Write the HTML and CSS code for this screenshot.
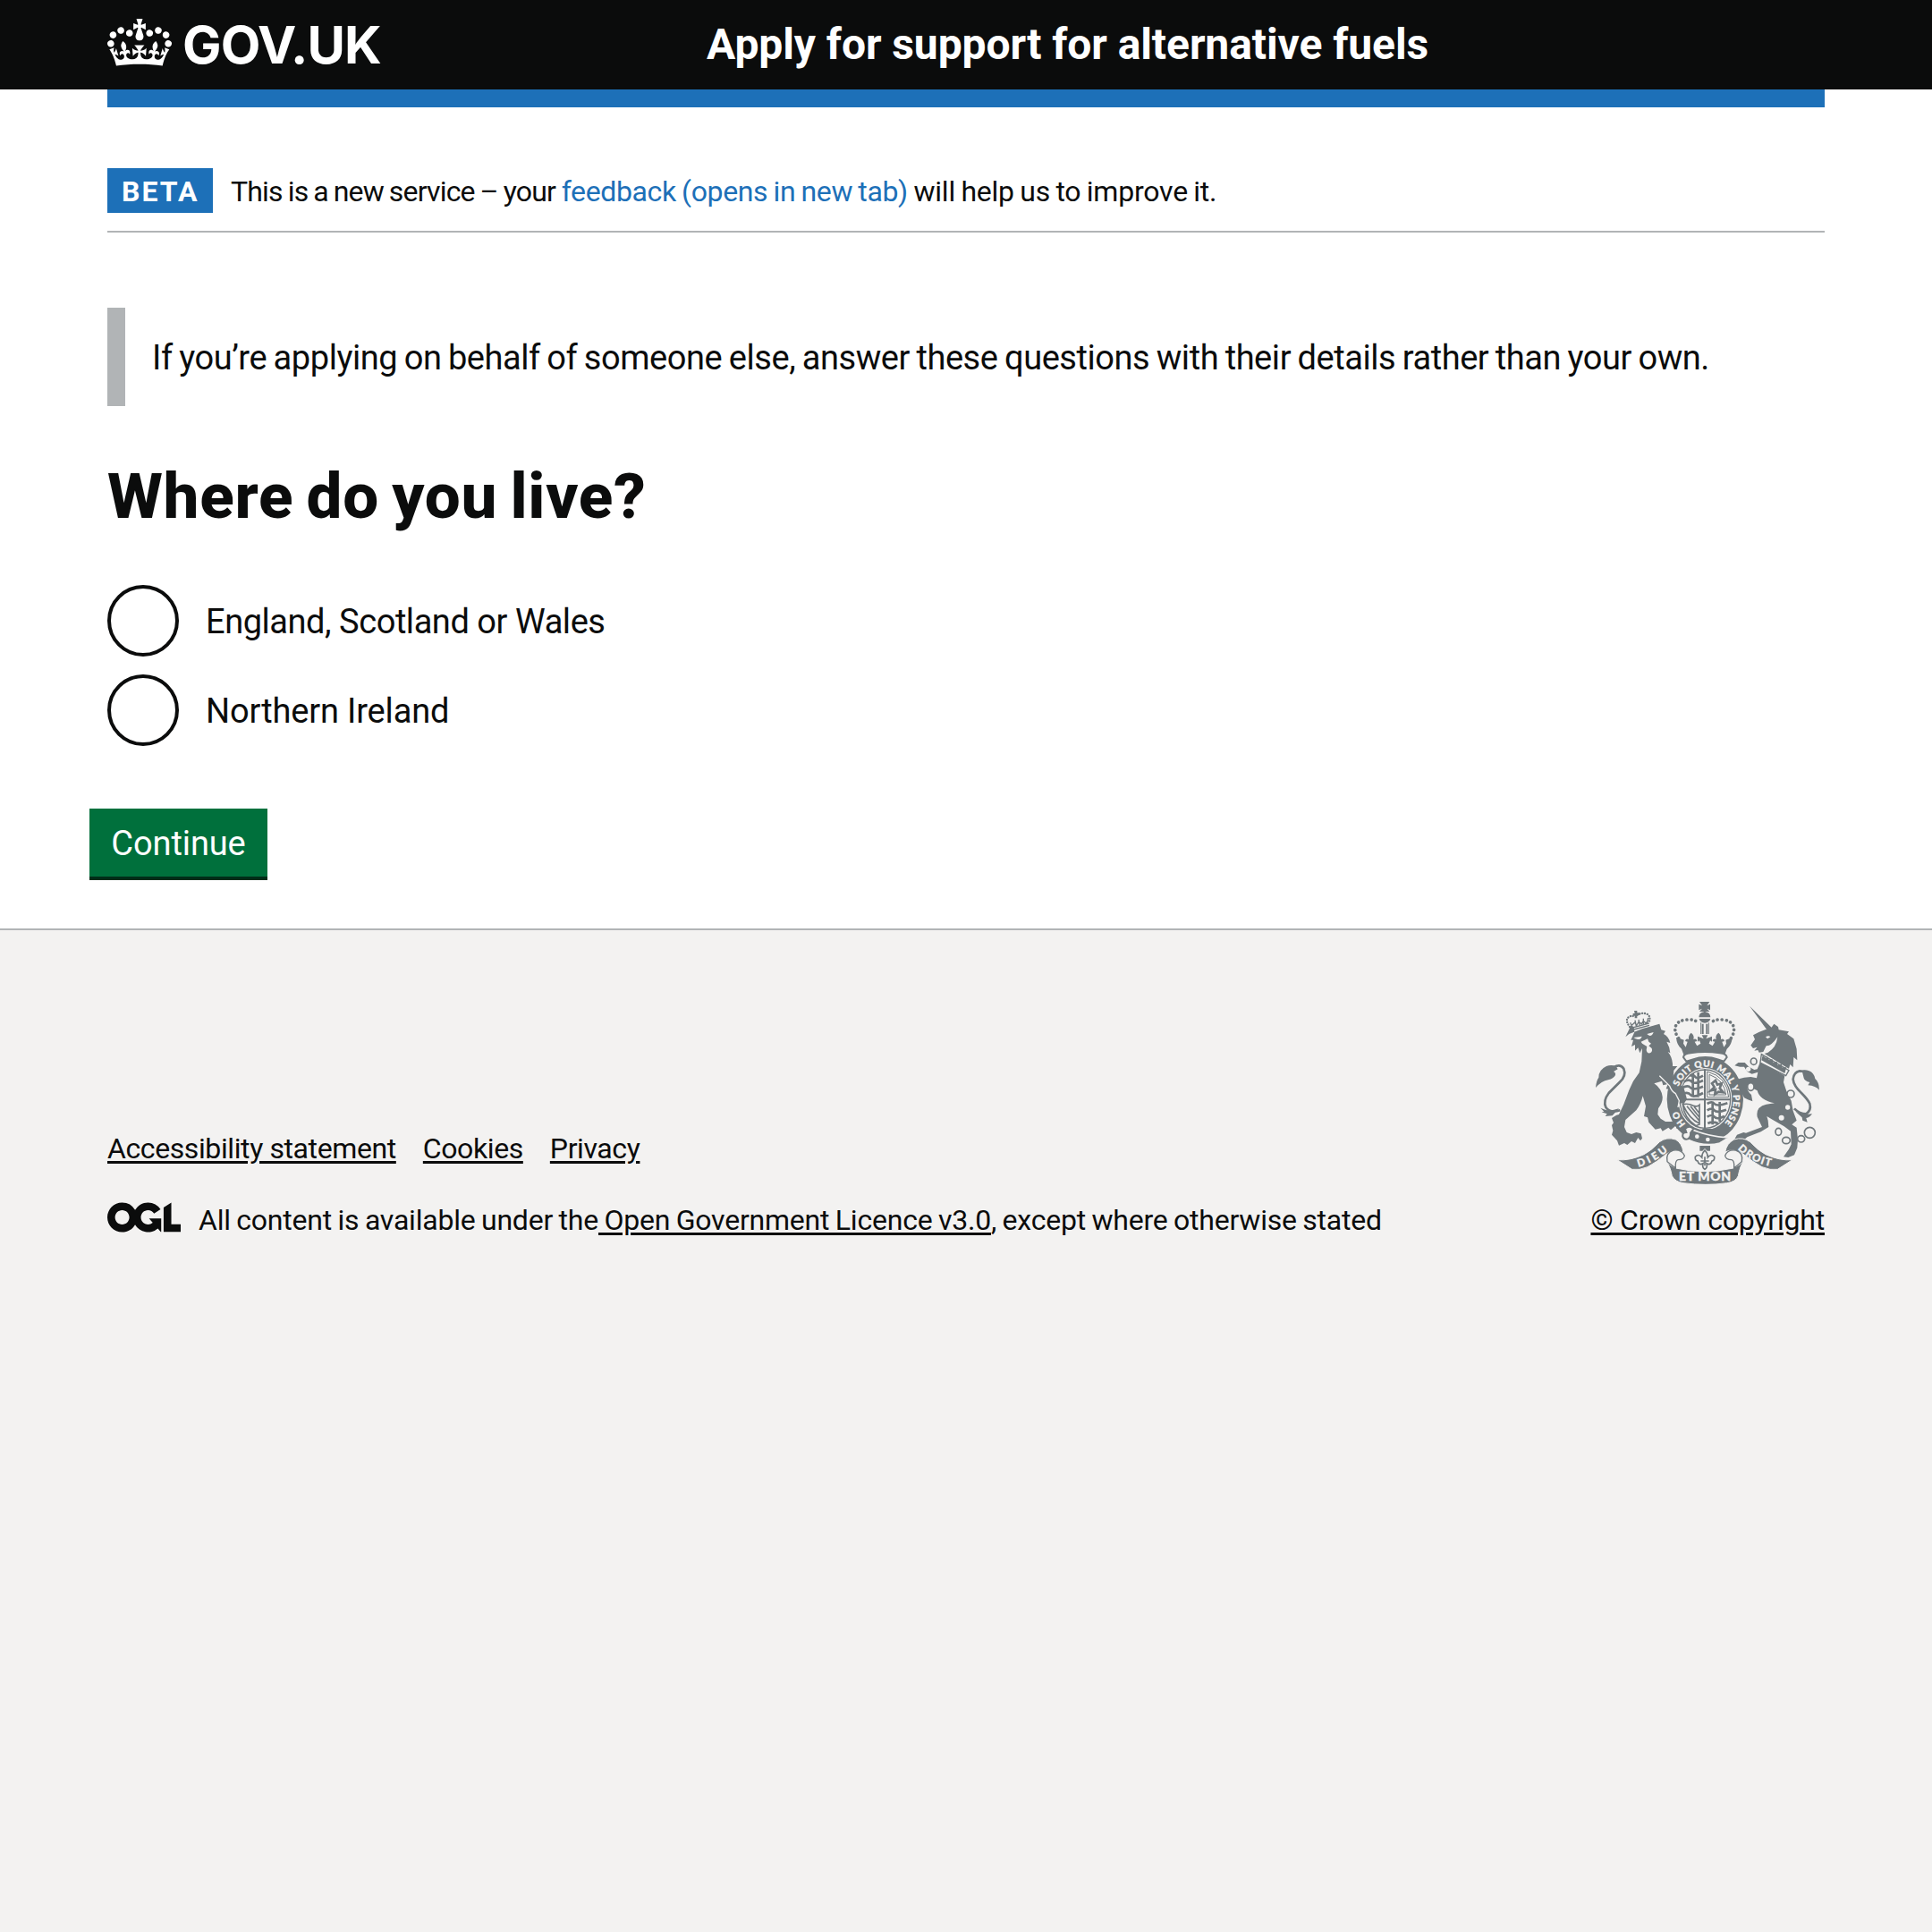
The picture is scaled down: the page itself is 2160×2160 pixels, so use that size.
FILE: index.html
```
<!DOCTYPE html>
<html lang="en">
<head>
<meta charset="utf-8">
<title>Where do you live? - Apply for support for alternative fuels - GOV.UK</title>
<link rel="stylesheet" href="styles.css">
</head>
<body>
<header class="header">
  <div class="container header-row">
    <a class="logo" href="#">
      <svg class="crown" viewBox="0 0 132 97" aria-hidden="true"><path fill="currentColor" fill-rule="evenodd" d="M25 30.2c3.5 1.5 7.7-.2 9.1-3.7 1.5-3.6-.2-7.8-3.9-9.2-3.6-1.4-7.6.3-9.1 3.9-1.4 3.5.3 7.5 3.9 9zM9 39.5c3.6 1.5 7.8-.2 9.2-3.7 1.5-3.6-.2-7.8-3.9-9.1-3.6-1.5-7.6.2-9.1 3.8-1.4 3.5.3 7.5 3.8 9zM4.4 57.2c3.5 1.5 7.7-.2 9.1-3.8 1.5-3.6-.2-7.7-3.9-9.1-3.5-1.5-7.6.3-9.1 3.8-1.4 3.5.3 7.6 3.9 9.1zm38.3-21.4c3.5 1.5 7.7-.2 9.1-3.8 1.5-3.6-.2-7.7-3.9-9.1-3.6-1.5-7.6.3-9.1 3.8-1.3 3.6.4 7.7 3.9 9.1zm64.4-5.6c-3.6 1.5-7.8-.2-9.1-3.7-1.5-3.6.2-7.8 3.8-9.2 3.6-1.4 7.7.3 9.2 3.9 1.3 3.5-.4 7.5-3.9 9zm15.9 9.3c-3.6 1.5-7.7-.2-9.1-3.7-1.5-3.6.2-7.8 3.7-9.1 3.6-1.5 7.7.2 9.2 3.8 1.5 3.5-.3 7.5-3.8 9zm4.7 17.7c-3.6 1.5-7.8-.2-9.2-3.8-1.5-3.6.2-7.7 3.9-9.1 3.6-1.5 7.7.3 9.2 3.8 1.3 3.5-.4 7.6-3.9 9.1zM89.3 35.8c-3.6 1.5-7.8-.2-9.2-3.8-1.4-3.6.2-7.7 3.9-9.1 3.6-1.5 7.7.3 9.2 3.8 1.4 3.6-.3 7.7-3.9 9.1zM69.7 17.7l8.9 4.7V9.3l-8.9 2.8c-.2-.3-.5-.6-.9-.9L72.4 0H59.6l3.5 11.2c-.3.3-.6.5-.9.9l-8.8-2.8v13.1l8.8-4.7c.3.3.6.7.9.9l-5 15.4v.1c-.2.8-.4 1.6-.4 2.4 0 4.1 3.1 7.5 7 8.1h.2c.3 0 .7.1 1 .1.4 0 .7 0 1-.1h.2c4-.6 7.1-4.1 7.1-8.1 0-.8-.1-1.7-.4-2.4V34l-5.1-15.4c.4-.2.7-.6 1-.9zM66 92.8c16.9 0 32.8 1.1 47.1 3.2 4-16.9 8.9-26.7 14-33.5l-9.6-3.4c1 4.9 1.1 7.2 0 10.2-1.5-1.4-3-4.3-4.2-8.7L108.6 76c2.8-2 5-3.2 7.5-3.3-4.4 9.4-10 11.9-13.6 11.2-4.3-.8-6.3-4.6-5.6-7.9 1-4.7 5.7-5.9 8-.5 4.3-8.7-3-11.4-7.6-8.8 7.1-7.2 7.9-13.5 2.1-21.1-8 6.1-8.1 12.3-4.5 20.8-4.7-5.4-12.1-2.5-9.5 6.2 3.4-5.2 7.9-2 7.2 3.1-.6 4.3-6.4 7.8-13.5 7.2-10.3-.9-10.9-8-11.2-13.8 2.5-.5 7.1 1.8 11 7.3L80.2 60c-4.1 4.4-8 5.3-12.3 5.4 1.4-4.4 8-11.6 8-11.6H55.5s6.4 7.2 7.9 11.6c-4.2-.1-8-1-12.3-5.4l1.4 16.4c3.9-5.5 8.5-7.7 10.9-7.3-.3 5.8-.9 12.8-11.1 13.8-7.2.6-12.9-2.9-13.5-7.2-.7-5 3.8-8.3 7.1-3.1 2.7-8.7-4.6-11.6-9.4-6.2 3.7-8.5 3.6-14.7-4.6-20.8-5.8 7.6-5 13.9 2.2 21.1-4.7-2.6-11.9.1-7.7 8.8 2.3-5.5 7.1-4.2 8.1.5.7 3.3-1.3 7.1-5.7 7.9-3.5.7-9-1.8-13.5-11.2 2.5.1 4.7 1.3 7.5 3.3l-4.7-15.4c-1.2 4.4-2.7 7.2-4.3 8.7-1.1-3-.9-5.3 0-10.2l-9.5 3.4c5 6.9 9.9 16.7 14 33.5 14.8-2.1 30.8-3.2 47.7-3.2z"/></svg>
      <span class="logo-text">GOV.UK</span>
    </a>
    <a class="service-name" href="#">Apply for support for alternative fuels</a>
  </div>
</header>
<div class="container">
  <div class="blue-bar"></div>
  <div class="phase-banner">
    <strong class="tag">BETA</strong>
    <p class="phase-text"><span class="phase-lead">This is a new service – your</span> <a class="link" href="#">feedback (opens in new tab)</a> <span class="phase-tail">will help us to improve it.</span></p>
  </div>
  <main class="main">
    <div class="inset">If you’re applying on behalf of someone else, answer these questions with their details rather than your own.</div>
    <h1 class="heading">Where do you live?</h1>
    <div class="radios">
      <label class="radio"><input class="radio-input" type="radio" name="country"><span class="radio-text">England, Scotland or Wales</span></label>
      <label class="radio"><input class="radio-input" type="radio" name="country"><span class="radio-text">Northern Ireland</span></label>
    </div>
    <button class="button" type="button">Continue</button>
  </main>
</div>
<footer class="footer">
  <div class="container footer-row">
    <div class="footer-meta">
      <nav class="footer-links">
        <a class="footer-link" href="#">Accessibility statement</a>
        <a class="footer-link" href="#">Cookies</a>
        <a class="footer-link" href="#">Privacy</a>
      </nav>
      <div class="licence">
        <svg class="ogl" viewBox="0 0 483.2 195.7" aria-hidden="true"><path fill="currentColor" d="M421.5 142.8V.1l-50.7 32.3v161.1h112.4v-50.7zm-122.3-9.6A47.12 47.12 0 0 1 221 97.8c0-26 21.1-47.1 47.1-47.1 16.7 0 31.4 8.7 39.7 21.8l42.7-27.2A97.63 97.63 0 0 0 268.1 0c-36.5 0-68.3 20.1-85.1 49.7A98 98 0 0 0 97.8 0C43.9 0 0 43.9 0 97.8s43.9 97.8 97.8 97.8c36.5 0 68.3-20.1 85.1-49.7a97.76 97.76 0 0 0 149.6 25.4l19.4 22.2h3v-87.8h-80l24.3 27.5zM97.8 145c-26 0-47.1-21.1-47.1-47.1s21.1-47.1 47.1-47.1 47.1 21.1 47.1 47.1S123.8 145 97.8 145"/></svg>
        <p class="licence-text">All content is available under the<a class="footer-link" href="#"> Open Government Licence v3.0</a>, except where otherwise stated</p>
      </div>
    </div>
    <a class="copyright" href="#">
      <svg class="arms" viewBox="72 60 750 612" aria-hidden="true">
        <defs>
          <path id="garter-band" d="M350 344A96 110 0 1 1 505 467"/>
          <path id="garter-left" d="M374 470A96 110 0 0 1 344 408"/>
          <path id="scroll-left" d="M215 614Q268 602 322 554"/>
          <path id="scroll-right" d="M548 554Q596 602 668 614"/>
        </defs>
        <!-- garter and shield -->
        <path fill="currentColor" fill-rule="evenodd" d="M439 243A128 144 0 0 1 439 531A128 144 0 0 1 439 243zM439 282A90 104 0 0 0 439 490A90 104 0 0 0 439 282z"/>
        <ellipse cx="439" cy="386" rx="85" ry="98" fill="none" stroke="currentColor" stroke-width="4"/>
        <g fill="none" stroke="currentColor">
          <path stroke-width="6" d="M438 286v200M352 388h172"/>
          <path stroke-width="3" d="M446 294v86h72q-4-68-72-86zM453 304v68h56q-6-50-56-68z"/>
          <path stroke-width="8" d="M462 334l12-10 6 14 14-4-6 16 12 14-16-2-12 8 2-16-16 4 12-12zM388 308q12-4 18 4t26-4M368 328q18-10 26 0t38-4M362 348q20-10 28 0t42-4M360 370q22-10 30 2t42-6M398 300v80M416 296v84"/>
          <path stroke-width="8" d="M446 402q16-10 24 0t44-2M446 424q16-10 24 0t40-2M446 446q16-10 24 0t34-2M448 468q16-8 34 0M464 396v76M488 396v66"/>
          <path stroke-width="5" d="M364 404q20-4 34 4 14 6 22-2v62q-34-14-56-64zM378 410l42 50M390 410l30 38M402 412l18 22M364 404q4 46 44 72l14-6"/>
        </g>
        <path fill="currentColor" d="M430 486h34v12h-34zM436 460h5v30h-5z"/>
        <!-- crown -->
        <g fill="currentColor">
          <path d="M420 60h34l-9 13 11-5v20l-11-5 9 10h-34l9-10-11 5V68l11 5zM418 112q1-16 17-18v-2h5v2q16 2 17 18z"/>
          <path d="M419 117h38q-4 13-19 14-15-1-19-14z"/>
          <path d="M346 180l22 8-2 12 8 12 6-18-8-2q2-10 12-6-2-14 8-22 12 8 8 22 10-4 12 6l-8 2 8 14 12-8-4-10-6 4v-18l20 8-6-12h20l-6 12 20-8v18l-6-4-4 10 12 8 8-14-8-2q2-10 12-6-4-14 8-22 10 8 8 22 10-4 12 6l-8 2 6 18 8-12-2-12 22-8q-2 26-18 38l-8 22q-66-16-136 0l-8-22q-16-12-18-38z"/>
        </g>
        <path fill="#f3f2f1" stroke="currentColor" stroke-width="6" d="M366 246q2-12 24-14 48-8 98 0 22 2 24 14l-10 14-20-7q-42-14-84 0l-22 7z"/>
        <g fill="none" stroke="currentColor">
          <path stroke-width="11" stroke-linecap="round" stroke-dasharray=".1 14.6" d="M350 182q-16-22-10-40 8-20 38-22 24-2 34 8M526 182q14-22 8-40-8-20-38-22-24-2-34 8"/>
          <path stroke-width="6" d="M431 134v34M445 134v34"/>
          <path stroke-width="3" d="M425 130v38M451 130v38"/>
        </g>
        <!-- lion -->
        <g transform="translate(60 30)" fill="currentColor">
          <path d="M112 148l12-10q50-22 102-34l6 20 14 4-6 10q18 10 22 30l-12-4q10 16 12 38l-8-4q14 16 16 40l0 8 16 0-12 14-2 22 12 14 24 24 10 36-10 16-14-2-12 8-12-20-2-14-12-4 6-16-14-2 6-16-16 4-4-14-26 8q24 16 28 44 2 18-14 40l-2 20 10 14 16 10 18 0 22-4 8 8-2 20-8 0-4-10-16 14-8-8-20 12-6-10-18 4-22-24-4-16-12-4 6-34-10-34q-6 26-22 48l-36 32-4 24 8 18 16 6 16-6 16 4 4 16-6 8-8-10-10 18-12-6-14 12-10-6-18 8-6-16-18-20 4-14-4-18 6-8-6-16 6-4 10-6 8-2 16-34 18-48 14-30 20-28 8-38 2-44-8 16-6-18-10 10 0-20-12 6 6-22-8 0 12-26-2-18-10-4z"/>
          <path d="M12 318q2-24 10-34 0-26 26-38 16-6 32 0l6 10-14 8q8 4 6 12-6 12-24 16-22 4-42 26z"/>
          <path fill="none" stroke="currentColor" stroke-width="8" d="M72 250q22-14 34 4 10 24-14 46l-36 36q-20 26-10 48 14 20 48 10"/>
          <path d="M28 386l16 6q18 6 46-4l-22 24-24 2 6-8-18-6 8-2z"/>
          <path fill="none" stroke="currentColor" stroke-width="4" d="M131 118l60-16M128 126l64-17M136 118l-8-18m20 12l-4-20m16 18l-4-20m16 16v-20m12 18l4-20M134 108l8-8 8 8 6-10 10 6 6-10 8 8 8-8"/>
          <path fill="none" stroke="currentColor" stroke-width="7" stroke-linecap="round" stroke-dasharray=".1 8.5" d="M126 114q-16-22-4-32 10-8 20-2M152 74q18-10 34-2 12 8 4 30"/>
          <path d="M141 60h10v7h8v8h-8v10h-8v-8h-6v-8h6z"/>
          <path fill="#f3f2f1" d="M139 150l28-4q-4 12-14 10-8-2-14-6zM184 138l22-6q-4 12-12 12-6-2-10-6zM164 164l22-10 4 10 8 6-8 8 10 8q4 12-6 16-10 2-12-10l2-12-16-10z"/>
        </g>
        <path fill="none" stroke="#f3f2f1" stroke-width="4" d="M286 308l34 34q6 18 20 26l12 24-4 22"/>
        <!-- garter buckle -->
        <path fill="currentColor" stroke="#f3f2f1" stroke-width="5" d="M384 484q60 28 134 32l-30 18q-50 14-108-12z"/>
        <path fill="#f3f2f1" stroke="currentColor" stroke-width="6" d="M400 486q-14-14-28 0l4 12q-14 0-12 14 4 12 18 8 10-8 8-20z"/>
        <circle cx="412" cy="512" r="7" fill="#f3f2f1"/><circle cx="448" cy="522" r="7" fill="#f3f2f1"/>
        <g class="arms-text arms-garter">
          <text><textPath href="#garter-band" textLength="364">SOIT QUI MAL Y PENSE</textPath></text>
          <text><textPath href="#garter-left" textLength="52">HO</textPath></text>
        </g>
        <!-- unicorn -->
        <g transform="translate(420 30)" fill="currentColor">
          <path d="M168 44l80 78-16 10zM232 130l18-26 14 10 2 10 34 6-6 8 22 16 10 34 2 38-12-10-2 34-10-10-4 14-18-10-64-40 12-4q28-16 32-52-22 32-38 30l-10 20-14 2-4-8-12 2 10-12-14 4-8-10 14-20-6-14q20-12 44-20z"/>
          <path d="M204 232l82 46-4 22 10 30 16 32 6 34 12 32-16 14 16 10 4 40-2 28-10 24-20 8-16-2 18-26 8-16-2-44-22-16-38-22-20-12 4 14 2 22-26 16-46 18-12 10h-32l10-18 22-8 8 2 54-20-16-34q-6-34 30-42l28-4q-24-4-40-16-14-10-18-26l-12-6-22-6q-2 6 8 20l6 6 4 22-16-6-12-6-10-20-8-26-16-6 10-10 24-6 22-2 20 4 4-20-20 6-16-8-10-16-14 0-18-4 12-10 22 0 14 14 18 10 10-2z"/>
          <path fill="none" stroke="currentColor" stroke-width="8" d="M318 388q18 18 40 18 18-12 12-34-6-14-28-36-26-24-28-46 2-24 22-28l18 2"/>
          <path d="M344 262q8-6 24 0 16 6 20 26 14 12 14 38-12-14-38-16l6-10q-18-4-20-14zM322 398q22 12 56 8-8 12-20 14l4 14-16-6-2-10z"/>
          <path fill="#f3f2f1" stroke="currentColor" stroke-width="4" d="M208 206l92 54-10 18-86-44z"/>
          <path d="M212 210l12 10 2-8 8 14 10-4 4 12 12-4 2 12 14-4 0 12 16 0-6 20-78-44z"/>
          <path fill="#f3f2f1" d="M222 148q10-6 16 0l-10 6z"/>
        </g>
        <g fill="none" stroke="currentColor" stroke-width="5">
          <ellipse cx="602" cy="260" rx="10" ry="11"/><ellipse cx="592" cy="345" rx="11" ry="13" fill="#f3f2f1"/><circle cx="726" cy="369" r="12" fill="#f3f2f1"/><ellipse cx="685" cy="496" rx="10" ry="12"/><ellipse cx="711" cy="525" rx="13" ry="11"/><ellipse cx="761" cy="520" rx="12" ry="11"/><circle cx="790" cy="499" r="18"/>
        </g>
        <g fill="#f3f2f1"><circle cx="584" cy="286" r="8"/><circle cx="716" cy="414" r="8"/><circle cx="695" cy="449" r="9"/></g>
        <!-- scroll -->
        <g fill="currentColor" stroke="#f3f2f1" stroke-width="3">
          <path d="M144 590q42 4 90-18 24-12 52-42 24-18 54-8 22 12 26 44-28-16-56 4-34 28-64 44-28 12-52 8z"/>
          <path d="M732 590q-42 4-90-18-24-12-52-42-24-18-54-8-24 12-30 42 28-14 60 6 34 28 64 44 28 12 52 8z"/>
          <path d="M306 590q10 16 34 28 96 22 194 0 26-12 36-28-14 20-20 54-8 20-38 24-70 10-146 0-28-4-38-24-6-34-22-54z"/>
        </g>
        <path fill="#f3f2f1" stroke="currentColor" stroke-width="4" d="M312 596q-6-30 20-38 28-4 38 18-2 14-22 14-10 2-8 28zM562 596q6-30-20-38-28-4-36 18 2 14 22 14 10 2 8 28z"/>
        <path fill="currentColor" d="M421 543h35v17h-10l-8-8-8 8h-9z"/>
        <path fill="none" stroke="currentColor" stroke-width="5" d="M438 622q-10-6-6-20-14 8-18-8-10-2-8-14 10-12 22 2 0-14 10-24 10 10 10 24 12-14 22-2 2 12-8 14-4 16-18 8 4 14-6 20zM424 594h28M438 580v30"/>
        <g class="arms-text">
          <text class="arms-scroll"><textPath href="#scroll-left" textLength="114">DIEU</textPath></text>
          <text class="arms-scroll"><textPath href="#scroll-right" textLength="126">DROIT</textPath></text>
          <text class="arms-motto" x="351" y="661" textLength="174">ET MON</text>
        </g>
      </svg>
      <span class="copyright-text">© Crown copyright</span>
    </a>
  </div>
</footer>
</body>
</html>
```
FILE: styles.css
```
* { box-sizing: border-box; }
body {
  margin: 0;
  min-height: 100vh;
  display: flex;
  flex-direction: column;
  background: #fff;
  color: #0b0c0c;
  font-family: Roboto, "Liberation Sans", sans-serif;
  font-size: 38px;
  line-height: 50px;
}
p, h1 { margin: 0; }
.container { width: 1920px; margin: 0 auto; }

.header { background: #0b0c0c; color: #fff; height: 100px; }
.header-row { display: grid; grid-template-columns: 670px 1fr; height: 100px; }
.header a { color: #fff; text-decoration: none; }
.logo { display: flex; padding-top: 21px; gap: 12px; }
.crown { width: 72px; height: 53px; display: block; }
.logo-text {
  font-family: Inter, sans-serif;
  font-weight: 700;
  font-size: 58px;
  line-height: 58px;
  letter-spacing: -0.9px;
}
.service-name {
  font-weight: 700;
  font-size: 48px;
  line-height: 60px;
  letter-spacing: -0.08px;
  padding-top: 20px;
}

.blue-bar { height: 20px; background: #1d70b8; }
.phase-banner {
  display: flex;
  align-items: flex-start;
  gap: 20px;
  height: 140px;
  padding-top: 68px;
  border-bottom: 2px solid #b1b4b6;
}
.tag {
  width: 118px;
  height: 50px;
  background: #1d70b8;
  color: #fff;
  font-size: 32px;
  line-height: 53px;
  letter-spacing: 2px;
  padding-left: 16px;
}
.phase-text { font-size: 32px; line-height: 53px; white-space: nowrap; word-spacing: -1.3px; }
.phase-lead { letter-spacing: -0.8px; }
.phase-tail { letter-spacing: -0.22px; }
.link { color: #1d70b8; text-decoration: none; letter-spacing: -0.37px; }

.main { padding-top: 84px; }
.inset {
  border-left: 20px solid #b1b4b6;
  padding: 31px 0 29px 30px;
  white-space: nowrap;
  letter-spacing: -0.44px;
  word-spacing: -1.5px;
}
.heading {
  margin-top: 61px;
  font-size: 71px;
  line-height: 80px;
  font-weight: 800;
  letter-spacing: 0.7px;
  word-spacing: -4px;
}
.radios { display: flex; flex-direction: column; gap: 20px; margin-top: 59px; }
.radio {
  display: flex;
  align-items: center;
  gap: 30px;
  height: 80px;
  letter-spacing: -0.15px;
}
.radio-text { padding-top: 2px; }
.radio:first-child { letter-spacing: -0.45px; }
.radio-input {
  appearance: none;
  width: 80px;
  height: 80px;
  margin: 0;
  border: 4px solid #0b0c0c;
  border-radius: 50%;
}
.button {
  display: block;
  margin: 70px 0 0 -20px;
  width: 199px;
  height: 76px;
  border: 0;
  background: #00703c;
  box-shadow: 0 4px 0 #002d18;
  color: #fff;
  font: inherit;
  letter-spacing: -0.1px;
  padding: 2px 0 0;
}

.footer {
  flex: 1;
  margin-top: 58px;
  border-top: 2px solid #b1b4b6;
  background: #f3f2f1;
  font-size: 32px;
  line-height: 40px;
}
.footer-row { display: flex; justify-content: space-between; align-items: flex-end; padding-top: 80px; }
.footer-meta { display: flex; flex-direction: column; gap: 40px; }
.footer-links { display: flex; gap: 30px; letter-spacing: -0.4px; }
.footer-link, .copyright {
  color: #0b0c0c;
  text-decoration: underline;
  text-decoration-thickness: 3px;
  text-underline-offset: 3px;
}
.licence { display: flex; gap: 20px; align-items: flex-start; }
.ogl { width: 82px; height: 34px; }
.licence-text { white-space: nowrap; letter-spacing: -0.22px; word-spacing: -1.2px; }
.copyright { display: flex; flex-direction: column; align-items: center; gap: 20px; letter-spacing: -0.2px; }
.arms { width: 250px; height: 204px; color: #6f777b; display: block; }
.arms-text { fill: #f3f2f1; font-family: Lato, sans-serif; font-weight: 900; letter-spacing: 0; stroke: #f3f2f1; stroke-width: 1px; }
.arms-garter { font-size: 30px; }
.arms-scroll { font-size: 35px; }
.arms-motto { font-size: 42px; }
```
